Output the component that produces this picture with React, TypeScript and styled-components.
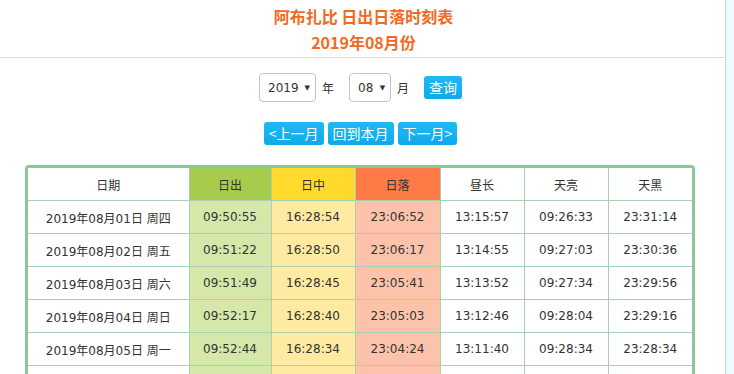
import { createGlobalStyle } from 'styled-components'
import styled from 'styled-components'

const GlobalStyle = createGlobalStyle`
  body {
    margin: 0;
    background: #f0f9fe;
    font-family: 'DejaVu Sans', 'Noto Sans CJK SC', sans-serif;
    color: #333;
  }
`

type Row = {
  date: string
  sunrise: string
  noon: string
  sunset: string
  length: string
  dawn: string
  dusk: string
}

const rows: Row[] = [
  { date: '2019年08月01日 周四', sunrise: '09:50:55', noon: '16:28:54', sunset: '23:06:52', length: '13:15:57', dawn: '09:26:33', dusk: '23:31:14' },
  { date: '2019年08月02日 周五', sunrise: '09:51:22', noon: '16:28:50', sunset: '23:06:17', length: '13:14:55', dawn: '09:27:03', dusk: '23:30:36' },
  { date: '2019年08月03日 周六', sunrise: '09:51:49', noon: '16:28:45', sunset: '23:05:41', length: '13:13:52', dawn: '09:27:34', dusk: '23:29:56' },
  { date: '2019年08月04日 周日', sunrise: '09:52:17', noon: '16:28:40', sunset: '23:05:03', length: '13:12:46', dawn: '09:28:04', dusk: '23:29:16' },
  { date: '2019年08月05日 周一', sunrise: '09:52:44', noon: '16:28:34', sunset: '23:04:24', length: '13:11:40', dawn: '09:28:34', dusk: '23:28:34' },
  { date: '2019年08月06日 周二', sunrise: '09:53:11', noon: '16:28:28', sunset: '23:03:44', length: '13:10:33', dawn: '09:29:04', dusk: '23:27:51' }
]

type Tone = 'plain' | 'rise' | 'noon' | 'set'

const headBg: Record<Tone, string> = {
  plain: '#ffffff',
  rise: '#a7cb4d',
  noon: '#ffd92c',
  set: '#ff7b45'
}

const bodyBg: Record<Tone, string> = {
  plain: '#ffffff',
  rise: '#d5e8a9',
  noon: '#ffeaa1',
  set: '#fdc3aa'
}

const App = () => {
  return (
    <>
      <GlobalStyle />
      <Page>
        <Header>
          <Title>阿布扎比 日出日落时刻表</Title>
          <Title>2019年08月份</Title>
        </Header>

        <QueryForm>
          <SelectBox $width={57}>
            <Select defaultValue="2019">
              <option>2019</option>
            </Select>
            <Arrow>▼</Arrow>
          </SelectBox>
          <Unit>年</Unit>
          <SelectBox $width={42}>
            <Select defaultValue="08">
              <option>08</option>
            </Select>
            <Arrow>▼</Arrow>
          </SelectBox>
          <Unit>月</Unit>
          <BlueButton>查询</BlueButton>
        </QueryForm>

        <MonthNav>
          <BlueButton>&lt;上一月</BlueButton>
          <BlueButton>回到本月</BlueButton>
          <BlueButton>下一月&gt;</BlueButton>
        </MonthNav>

        <TableFrame>
          <Table>
            <colgroup>
              <col style={{ width: 161 }} />
              <col style={{ width: 82 }} />
              <col style={{ width: 84 }} />
              <col style={{ width: 85 }} />
              <col style={{ width: 84 }} />
              <col style={{ width: 84 }} />
              <col />
            </colgroup>
            <thead>
              <tr>
                <Th $tone="plain">日期</Th>
                <Th $tone="rise">日出</Th>
                <Th $tone="noon">日中</Th>
                <Th $tone="set">日落</Th>
                <Th $tone="plain">昼长</Th>
                <Th $tone="plain">天亮</Th>
                <Th $tone="plain">天黑</Th>
              </tr>
            </thead>
            <tbody>
              {rows.map((r) => (
                <tr key={r.date}>
                  <Td $tone="plain">{r.date}</Td>
                  <Td $tone="rise">{r.sunrise}</Td>
                  <Td $tone="noon">{r.noon}</Td>
                  <Td $tone="set">{r.sunset}</Td>
                  <Td $tone="plain">{r.length}</Td>
                  <Td $tone="plain">{r.dawn}</Td>
                  <Td $tone="plain">{r.dusk}</Td>
                </tr>
              ))}
            </tbody>
          </Table>
        </TableFrame>
      </Page>
    </>
  )
}

const Page = styled.div`
  width: 725px;
  height: 374px;
  overflow: hidden;
  background: #fff;
  border-right: 1px solid #b9dcef;
`

const Header = styled.div`
  height: 58px;
  box-sizing: border-box;
  border-bottom: 1px solid #dcdcdc;
  display: flex;
  flex-direction: column;
  align-items: center;
  padding-top: 3px;
`

const Title = styled.div`
  font-family: 'Noto Sans CJK SC', sans-serif;
  font-weight: bold;
  font-size: 16px;
  line-height: 26px;
  color: #f26a1f;
  padding-left: 2px;
`

const QueryForm = styled.div`
  display: flex;
  align-items: center;
  margin: 15px 0 0 259px;
  height: 29px;
`

const SelectBox = styled.div<{ $width: number }>`
  position: relative;
  width: ${({ $width }) => $width}px;
  height: 29px;
`

const Select = styled.select`
  appearance: none;
  width: 100%;
  height: 100%;
  box-sizing: border-box;
  border: 1px solid #c4c4c4;
  border-radius: 4px;
  background: #fff;
  padding: 0 0 0 8px;
  font-family: 'DejaVu Sans', sans-serif;
  font-size: 12px;
  color: #333;
  outline: none;
`

const Arrow = styled.span`
  position: absolute;
  right: 6px;
  top: 10px;
  font-size: 7px;
  line-height: 10px;
  color: #333;
  pointer-events: none;
`

const Unit = styled.span`
  font-family: 'Noto Sans CJK SC', sans-serif;
  font-size: 12px;
  margin: 0 15px 0 6px;
  color: #333;
`

const BlueButton = styled.button`
  height: 23px;
  padding: 0 5px;
  border: none;
  border-radius: 3px;
  background: linear-gradient(#1fbaf5, #0ea9ea);
  color: #fff;
  font-family: 'Noto Sans CJK SC', sans-serif;
  font-size: 14px;
  line-height: 23px;
  margin: 0;
  cursor: pointer;
`

const MonthNav = styled.div`
  display: flex;
  justify-content: center;
  gap: 4px;
  margin-top: 20px;
  padding-right: 4px;
`

const TableFrame = styled.div`
  width: 670px;
  box-sizing: border-box;
  margin: 20px 0 0 25px;
  border: 3px solid #8dc498;
  border-radius: 4px;
  overflow: hidden;
`

const Table = styled.table`
  width: 100%;
  border-collapse: collapse;
  table-layout: fixed;
  font-size: 12px;
`

const Th = styled.th<{ $tone: Tone }>`
  height: 32px;
  padding: 0;
  font-weight: normal;
  font-family: 'Noto Sans CJK SC', sans-serif;
  color: #333;
  background: ${({ $tone }) => headBg[$tone]};
  border-left: 1px solid #a9d0b2;
  border-bottom: 1px solid #a9d0b2;

  &:first-child {
    border-left: none;
  }
`

const Td = styled.td<{ $tone: Tone }>`
  height: 32px;
  padding: 0;
  text-align: center;
  color: #333;
  background: ${({ $tone }) => bodyBg[$tone]};
  border-left: 1px solid #a9d0b2;
  border-bottom: 1px solid #a9d0b2;

  &:first-child {
    border-left: none;
  }
`

export default App
